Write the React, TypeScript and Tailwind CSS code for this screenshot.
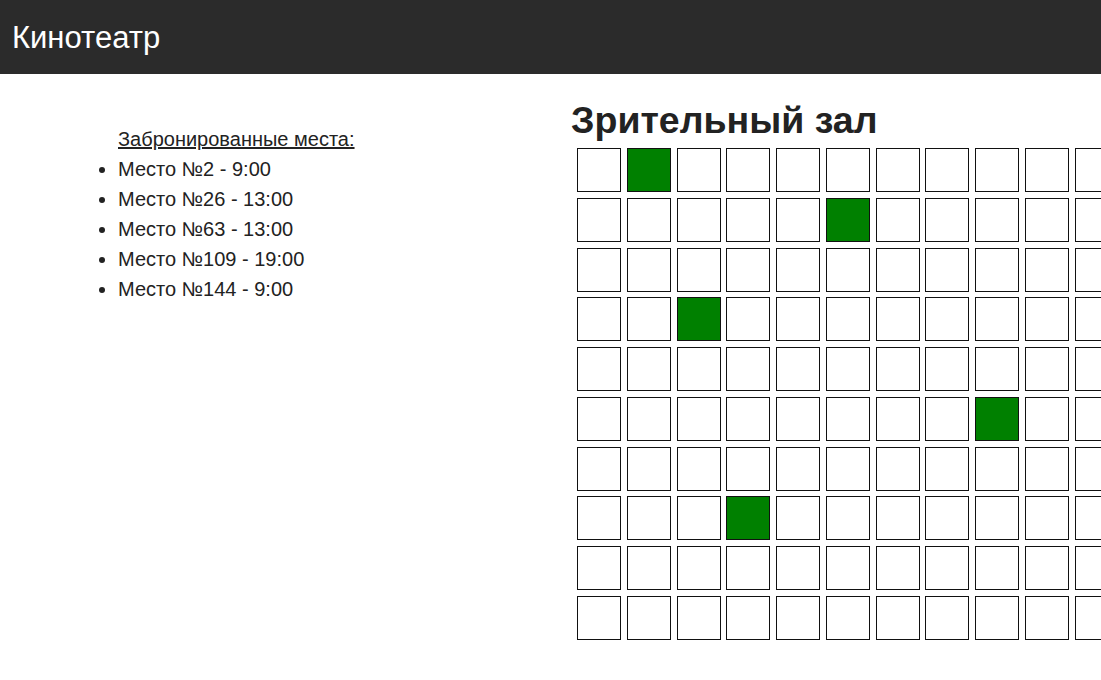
import React from "react";

const ROWS = 10;
const COLS = 20;
const booked = [
  { seat: 2, time: "9:00" },
  { seat: 26, time: "13:00" },
  { seat: 63, time: "13:00" },
  { seat: 109, time: "19:00" },
  { seat: 144, time: "9:00" },
];

export default function App() {
  const bookedSet = new Set(booked.map((b) => b.seat));
  const seats = Array.from({ length: ROWS * COLS }, (_, i) => i + 1);

  return (
    <div className="w-[1101px] h-[680px] overflow-hidden bg-white text-[#222] font-['Liberation_Sans',Arial,sans-serif]">
      <header className="h-[74px] bg-[#2b2b2b] flex items-center px-3">
        <span className="text-white text-[31px] leading-none">Кинотеатр</span>
      </header>

      <main className="flex">
        {/* booked list */}
        <div className="w-[550px] shrink-0 pl-[78px] pt-[50px]">
          <div className="pl-10 text-[20px] underline leading-[30px]">Забронированные места:</div>
          <ul className="list-disc pl-10 text-[20px] leading-[30px]">
            {booked.map((b) => (
              <li key={b.seat}>
                Место №{b.seat} - {b.time}
              </li>
            ))}
          </ul>
        </div>

        {/* hall */}
        <div className="shrink-0 pl-[21px] pt-[24px]">
          <h1 className="text-[37.5px] font-bold leading-[45px]">Зрительный зал</h1>
          <div className="grid grid-cols-[repeat(20,44px)] gap-[5.75px] pl-[6px] pt-[5px]">
            {seats.map((n) => (
              <div
                key={n}
                className={
                  bookedSet.has(n)
                    ? "w-[44px] h-[44px] border border-[#111] bg-[#008000]"
                    : "w-[44px] h-[44px] border border-[#111] bg-white"
                }
              />
            ))}
          </div>
        </div>
      </main>
    </div>
  );
}
